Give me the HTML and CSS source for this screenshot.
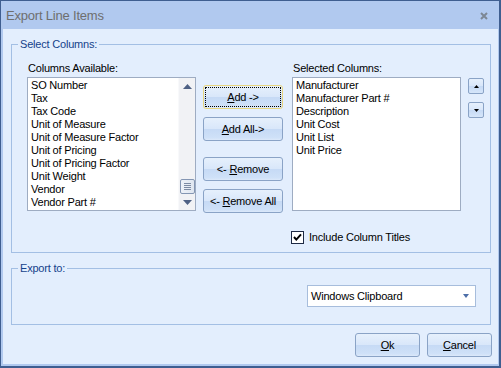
FILE: index.html
```html
<!DOCTYPE html>
<html>
<head>
<meta charset="utf-8">
<link rel="stylesheet" href="styles.css">
</head>
<body>
<div class="window">
  <div class="titlebar">
    <span class="title">Export Line Items</span>
    <svg class="close" width="8" height="8" viewBox="0 0 8 8"><path d="M1 1 L7 7 M7 1 L1 7" stroke="#7d8794" stroke-width="2" fill="none"/></svg>
  </div>
  <div class="client">
    <fieldset class="group">
      <legend>Select Columns:</legend>
      <div class="group-body cols">
        <div class="col col-avail">
          <div class="label">Columns Available:</div>
          <div class="listbox">
            <ul class="items">
              <li>SO Number</li>
              <li>Tax</li>
              <li>Tax Code</li>
              <li>Unit of Measure</li>
              <li>Unit of Measure Factor</li>
              <li>Unit of Pricing</li>
              <li>Unit of Pricing Factor</li>
              <li>Unit Weight</li>
              <li>Vendor</li>
              <li>Vendor Part #</li>
            </ul>
            <div class="vscroll">
              <div class="sb-btn"><svg width="9" height="5" viewBox="0 0 9 5"><path d="M0 5 L4.5 0 L9 5 Z" fill="#4e6184"/></svg></div>
              <div class="sb-track">
                <div class="sb-thumb"><span></span><span></span><span></span><span></span></div>
              </div>
              <div class="sb-btn sb-down"><svg width="9" height="5" viewBox="0 0 9 5"><path d="M0 0 L9 0 L4.5 5 Z" fill="#4e6184"/></svg></div>
            </div>
          </div>
        </div>
        <div class="movebtns">
          <div class="btn focused"><span class="focus-rect"><span><u>A</u>dd -&gt;</span></span></div>
          <div class="btn"><span><u>A</u>dd All-&gt;</span></div>
          <div class="btn btn-gap"><span>&lt;- <u>R</u>emove</span></div>
          <div class="btn"><span>&lt;- <u>R</u>emove All</span></div>
        </div>
        <div class="col col-sel">
          <div class="label">Selected Columns:</div>
          <div class="listbox">
            <ul class="items">
              <li>Manufacturer</li>
              <li>Manufacturer Part #</li>
              <li>Description</li>
              <li>Unit Cost</li>
              <li>Unit List</li>
              <li>Unit Price</li>
            </ul>
          </div>
        </div>
        <div class="updown">
          <div class="sbtn"><svg width="5" height="3" viewBox="0 0 5 3"><path d="M0 3 L2.5 0 L5 3 Z" fill="#000"/></svg></div>
          <div class="sbtn"><svg width="5" height="3" viewBox="0 0 5 3"><path d="M0 0 L5 0 L2.5 3 Z" fill="#000"/></svg></div>
        </div>
        <div class="checkrow">
          <span class="checkbox"><svg width="11" height="11" viewBox="0 0 11 11"><path d="M2 5 L4.3 7.6 L9 2.4" stroke="#000" stroke-width="2" fill="none"/></svg></span>
          <span class="checklabel">Include Column Titles</span>
        </div>
      </div>
    </fieldset>
    <fieldset class="group group-export">
      <legend>Export to:</legend>
      <div class="group-body export-body">
        <div class="combo">
          <span class="combo-text">Windows Clipboard</span>
          <svg class="combo-arrow" width="6" height="4" viewBox="0 0 6 4"><path d="M0 0 L6 0 L3 4 Z" fill="#4c6ea8"/></svg>
        </div>
      </div>
    </fieldset>
    <div class="actions">
      <div class="btn act"><span><u>O</u>k</span></div>
      <div class="btn act"><span><u>C</u>ancel</span></div>
    </div>
  </div>
</div>
</body>
</html>
```
FILE: styles.css
```css
* { box-sizing: border-box; }
body {
  margin: 0;
  font-family: "Liberation Sans", Arial, sans-serif;
  font-size: 11px;
  letter-spacing: -0.2px;
  color: #000;
}
.window {
  width: 501px;
  height: 368px;
  border-style: solid;
  border-color: #3f5e90;
  border-width: 1px 2px 2px 1px;
  background: #b1c9ef;
  display: flex;
  flex-direction: column;
}
.titlebar {
  height: 28px;
  flex: none;
  display: flex;
  justify-content: space-between;
  align-items: flex-start;
  padding: 7px 11px 0 5px;
}
.title {
  font-size: 13px;
  line-height: 15px;
  color: #6e6e6e;
}
.close { margin-top: 4px; }
.client {
  flex: 1;
  margin: 0 1px 2px 2px;
  background: #e3eefd;
  padding: 9px 6px 0 8px;
  display: flex;
  flex-direction: column;
}
.group {
  margin: 0;
  padding: 0;
  width: 480px;
  min-width: 0;
  border: 1px solid #a3bfe4;
}
.group legend {
  margin-left: 6px;
  padding: 0 2px;
  line-height: 13px;
  color: #15428b;
}
.group-export { margin-top: 9px; }
.cols {
  display: grid;
  grid-template-columns: 169px 7px 80px 9px 169px 7px 16px;
  padding: 11px 0 8px 15px;
  align-items: start;
}
.col-avail { grid-column: 1; grid-row: 1; }
.movebtns { grid-column: 3; grid-row: 1; }
.col-sel { grid-column: 5; grid-row: 1; }
.updown { grid-column: 7; grid-row: 1; }
.label {
  line-height: 13px;
  padding-left: 1px;
}
.listbox {
  margin-top: 2px;
  height: 134px;
  border: 1px solid #9eacc2;
  background: #fff;
  display: flex;
}
.items {
  list-style: none;
  margin: 0;
  padding: 1px 0 0 3px;
  line-height: 13px;
  white-space: nowrap;
  flex: 1;
  overflow: hidden;
}
.vscroll {
  width: 17px;
  flex: none;
  background: #f1f2f5;
  border-left: 1px solid #f8f9fb;
  display: flex;
  flex-direction: column;
}
.sb-btn {
  height: 17px;
  display: flex;
  align-items: center;
  justify-content: center;
  flex: none;
}
.sb-down { height: 15px; }
.sb-track {
  flex: 1;
  display: flex;
  flex-direction: column;
  justify-content: flex-end;
  align-items: center;
}
.sb-thumb {
  width: 15px;
  height: 15px;
  margin-bottom: 1px;
  border: 1px solid #8496b3;
  border-radius: 2px;
  background: linear-gradient(to right, #eef2f8, #dfe6f0);
  display: flex;
  flex-direction: column;
  align-items: center;
  justify-content: center;
  gap: 1px;
}
.sb-thumb span {
  display: block;
  width: 7px;
  height: 1px;
  background: #7d8ba3;
}
.movebtns {
  padding-top: 23px;
  display: flex;
  flex-direction: column;
  gap: 8px;
  margin-bottom: -2px;
}
.btn {
  height: 24px;
  border: 1px solid #8aa3c6;
  border-radius: 3px;
  background: linear-gradient(#e6f0fc 0%, #d9e7fa 48%, #c6daf5 52%, #cfe1f8 90%, #dce9fa 100%);
  display: flex;
  align-items: center;
  justify-content: center;
  line-height: 13px;
  white-space: pre;
}
.btn-gap { margin-top: 8px; }
.btn.focused {
  border-color: #e8d680;
  align-items: stretch;
}
.focus-rect {
  flex: 1;
  margin: 1px;
  border: 1px dotted #000;
  display: flex;
  align-items: center;
  justify-content: center;
}
.updown {
  padding-top: 16px;
  display: flex;
  flex-direction: column;
  gap: 8px;
}
.sbtn {
  width: 16px;
  height: 16px;
  border: 1px solid #8aa3c6;
  border-radius: 2px;
  background: linear-gradient(#e6f0fc 0%, #d9e7fa 48%, #c6daf5 52%, #d6e6fa 100%);
  display: flex;
  align-items: center;
  justify-content: center;
}
.checkrow {
  grid-column: 5 / span 3;
  grid-row: 2;
  margin-top: 20px;
  margin-left: -1px;
  height: 13px;
  display: flex;
  align-items: center;
  gap: 5px;
}
.checkbox {
  width: 13px;
  height: 13px;
  border: 1px solid #1e2a44;
  background: #fff;
  display: flex;
  align-items: center;
  justify-content: center;
}
.checklabel { line-height: 13px; }
.export-body {
  padding: 10px 14px 17px 0;
  display: flex;
  justify-content: flex-end;
}
.combo {
  width: 169px;
  height: 22px;
  border: 1px solid #a7bddc;
  background: #fff;
  display: flex;
  align-items: center;
  justify-content: space-between;
  padding: 0 6px 0 3px;
}
.combo-text { line-height: 13px; }
.actions {
  margin-top: 8px;
  display: flex;
  justify-content: flex-end;
  gap: 7px;
}
.btn.act { width: 65px; }
```
